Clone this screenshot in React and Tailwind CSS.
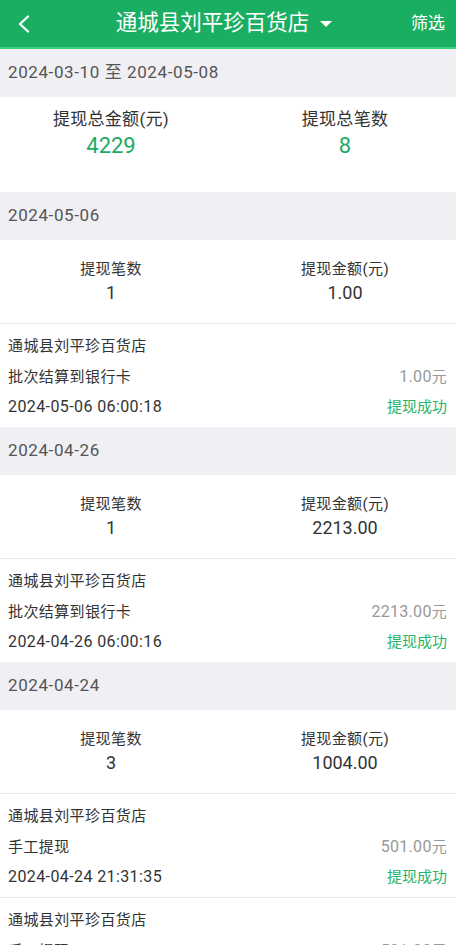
const groups = [
    {
        date: '2024-05-06',
        count: '1',
        amount: '1.00',
        items: [
            { type: '批次结算到银行卡', money: '1.00', time: '2024-05-06 06:00:18' },
        ],
    },
    {
        date: '2024-04-26',
        count: '1',
        amount: '2213.00',
        items: [
            { type: '批次结算到银行卡', money: '2213.00', time: '2024-04-26 06:00:16' },
        ],
    },
    {
        date: '2024-04-24',
        count: '3',
        amount: '1004.00',
        items: [
            { type: '手工提现', money: '501.00', time: '2024-04-24 21:31:35' },
            { type: '手工提现', money: '501.00', time: '2024-04-24 21:31:10' },
        ],
    },
];

function DateBar({ children }) {
    return (
        <div className="h-[48px] flex items-center px-2 text-[17px] tracking-[0.6px] text-[#555]">
            {children}
        </div>
    );
}

function Item({ item }) {
    return (
        <div className="bg-white border-t border-[#ececf0] pl-2 pr-[9px] pt-[7px] pb-[6px] text-[#333]">
            <div className="h-[30px] flex items-center text-[15px] tracking-[0.4px]">通城县刘平珍百货店</div>
            <div className="h-[32px] flex items-center justify-between">
                <span className="text-[15px] tracking-[0.4px]">{item.type}</span>
                <span className="text-[16px] tracking-[0.3px] text-[#999]">
                    {item.money}<span className="text-[15px]">元</span>
                </span>
            </div>
            <div className="h-[28px] flex items-center justify-between">
                <span className="text-[16px] tracking-[0.4px]">{item.time}</span>
                <span className="text-[15px] text-[#27b56a]">提现成功</span>
            </div>
        </div>
    );
}

export default function App() {
    return (
        <div
            className="w-full h-screen bg-[#efeff4] overflow-hidden"
            style={{ fontFamily: 'Roboto, "Noto Sans CJK SC", sans-serif' }}
        >
            <div className="h-[49px] bg-[#1aae62] border-b-2 border-[#3bd47c] flex items-center text-white">
                <div className="w-[60px] pl-[17px] flex items-center">
                    <svg width="13" height="18" viewBox="0 0 13 18" fill="none">
                        <path d="M11 1.5 L3 9 L11 16.5" stroke="white" strokeWidth="2.2" strokeLinecap="round" strokeLinejoin="round" />
                    </svg>
                </div>
                <div className="flex-1 flex items-center justify-center gap-[11px]">
                    <span className="text-[21.5px]">通城县刘平珍百货店</span>
                    <span className="w-0 h-0 border-l-[6px] border-r-[6px] border-t-[6px] border-l-transparent border-r-transparent border-t-white" />
                </div>
                <div className="w-[68px] flex justify-end pr-[11px]">
                    <span className="text-[17px]">筛选</span>
                </div>
            </div>

            <DateBar>2024-03-10 至 2024-05-08</DateBar>
            <div className="bg-white h-[95px] grid grid-cols-2 gap-x-3 pt-[10px]">
                <div className="flex flex-col items-center">
                    <span className="text-[17px] tracking-[0.3px] text-[#333] leading-[24px]">提现总金额(元)</span>
                    <span className="text-[22px] text-[#1daa63] leading-[30px]">4229</span>
                </div>
                <div className="flex flex-col items-center">
                    <span className="text-[17px] tracking-[0.3px] text-[#333] leading-[24px]">提现总笔数</span>
                    <span className="text-[22px] text-[#1daa63] leading-[30px]">8</span>
                </div>
            </div>

            {groups.map((g) => (
                <div key={g.date}>
                    <DateBar>{g.date}</DateBar>
                    <div className="bg-white h-[83px] grid grid-cols-2 gap-x-3 pt-[18px] text-[#333]">
                        <div className="flex flex-col items-center">
                            <span className="text-[15px] tracking-[0.4px] leading-[22px]">提现笔数</span>
                            <span className="text-[18px] leading-[26px]">{g.count}</span>
                        </div>
                        <div className="flex flex-col items-center">
                            <span className="text-[15px] tracking-[0.4px] leading-[22px]">提现金额(元)</span>
                            <span className="text-[18px] leading-[26px]">{g.amount}</span>
                        </div>
                    </div>
                    {g.items.map((it, i) => (
                        <Item key={i} item={it} />
                    ))}
                </div>
            ))}
        </div>
    );
}
